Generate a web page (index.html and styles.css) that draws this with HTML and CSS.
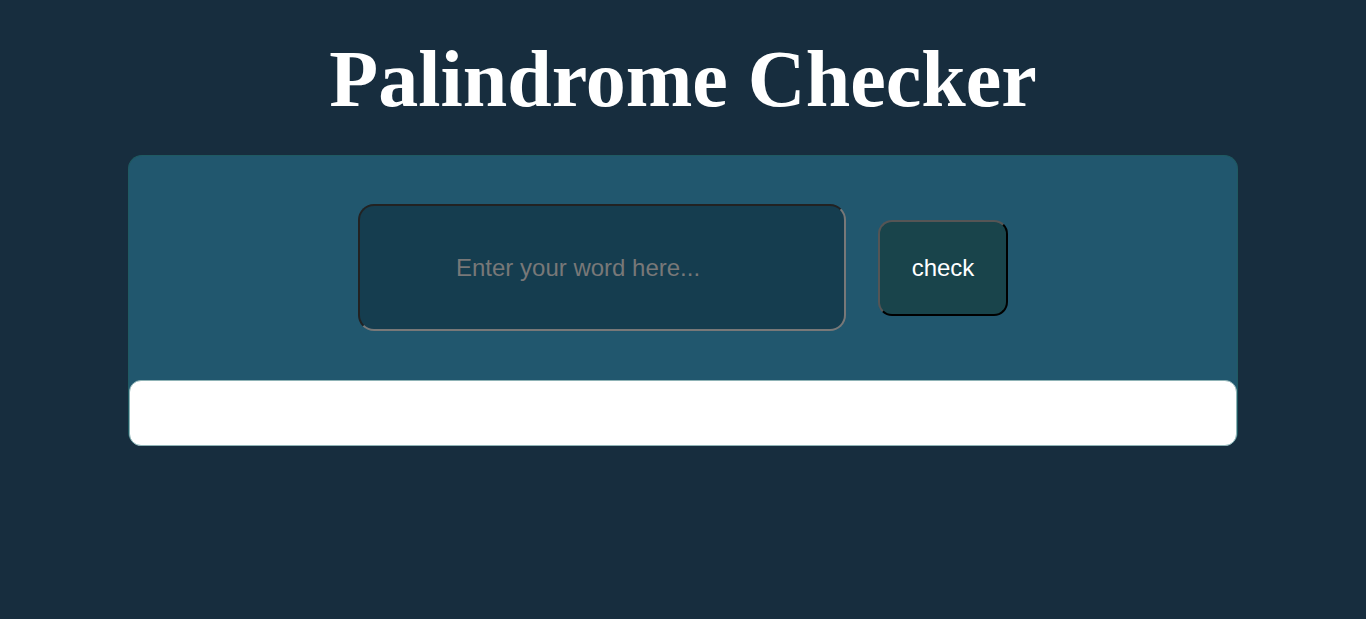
FILE: index.html
```html
<!DOCTYPE html>
<html>
<head>
<meta charset="utf-8">
<title>Palindrome Checker</title>
<link rel="stylesheet" href="styles.css">
</head>
<body>
<h1 class="title">Palindrome Checker</h1>
<div class="card">
  <div class="controls">
    <input class="word" type="text" placeholder="Enter your word here...">
    <button class="check">check</button>
  </div>
  <div class="result"></div>
</div>
</body>
</html>
```
FILE: styles.css
```css
html, body {
  margin: 0;
  padding: 0;
  background: #172d3e;
}
body {
  font-family: "Liberation Sans", Arial, sans-serif;
}
.title {
  margin: 0;
  padding-top: 33px;
  height: 155px;
  box-sizing: border-box;
  text-align: center;
  font-family: "Liberation Serif", "Times New Roman", serif;
  font-weight: bold;
  font-size: 80px;
  line-height: 92px;
  color: #ffffff;
}
.card {
  width: 1110px;
  margin: 0 auto;
  background: #21576e;
  border: 1px solid #1f5a62;
  border-bottom: 0;
  border-radius: 14px;
  box-sizing: border-box;
}
.controls {
  display: flex;
  justify-content: center;
  align-items: center;
  gap: 32px;
  padding: 48px 0 49px;
}
.word {
  width: 488px;
  height: 127px;
  box-sizing: border-box;
  padding: 0 0 0 96px;
  background: #153d4f;
  border: 2px solid #787878;
  border-top-color: #222222;
  border-left-color: #222222;
  border-radius: 16px;
  font-family: "Liberation Sans", Arial, sans-serif;
  font-size: 24px;
  color: #ffffff;
  outline: none;
}
.word::placeholder {
  color: #787878;
}
.check {
  width: 130px;
  height: 96px;
  box-sizing: border-box;
  background: #19444b;
  border: 2px solid #000000;
  border-top-color: #555555;
  border-left-color: #555555;
  border-radius: 14px;
  font-family: "Liberation Sans", Arial, sans-serif;
  font-size: 24px;
  color: #ffffff;
}
.result {
  height: 66px;
  box-sizing: border-box;
  background: #ffffff;
  border: 1px solid #8fb3b6;
  border-radius: 12px;
}
```
